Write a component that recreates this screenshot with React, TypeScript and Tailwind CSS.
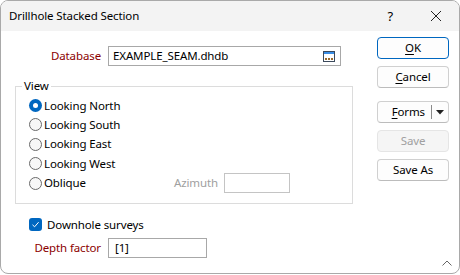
import React from "react";

function Radio({ checked }: { checked?: boolean }) {
  if (checked) {
    return (
      <span className="w-[13px] h-[13px] rounded-full bg-[#0067c0] flex items-center justify-center shrink-0">
        <span className="w-[5px] h-[5px] rounded-full bg-white" />
      </span>
    );
  }
  return <span className="w-[13px] h-[13px] rounded-full border border-[#6a6a6a] bg-[#f7f7f7] shrink-0" />;
}

function RadioRow({ label, checked, h }: { label: string; checked?: boolean; h: string }) {
  return (
    <div className={`flex items-center ${h}`}>
      <Radio checked={checked} />
      <span className="ml-[2px]">{label}</span>
    </div>
  );
}

function Btn({ children, primary, disabled, className = "" }: { children: React.ReactNode; primary?: boolean; disabled?: boolean; className?: string }) {
  const base = "w-[72px] h-[22px] rounded-[4px] flex items-center justify-center shrink-0";
  const look = primary
    ? "border border-[#0067c0] bg-[#fdfdfd]"
    : disabled
    ? "border border-[#e5e5e5] bg-[#f5f5f5] text-[#a0a0a0]"
    : "border border-[#d0d0d0] border-b-[#bcbcbc] bg-[#fdfdfd]";
  return <div className={`${base} ${look} ${className}`}>{children}</div>;
}

export default function App() {
  return (
    <div className="w-[460px] h-[275px] bg-white">
      <div className="w-[460px] h-[274px] rounded-[8px] border border-[#a9a9a9] overflow-hidden flex flex-col bg-white font-['Noto_Sans',sans-serif] text-[11.5px] tracking-[-0.12px] leading-none text-black">
        <div className="h-[30px] bg-[#f3f3f3] flex items-center shrink-0">
          <span className="ml-[8px]">Drillhole Stacked Section</span>
          <span className="ml-auto mr-[37px] text-[13px]">?</span>
          <svg width="12" height="12" viewBox="0 0 12 12" className="mr-[17px]">
            <path d="M1 1 L11 11 M11 1 L1 11" stroke="#222" strokeWidth="1" />
          </svg>
        </div>
        <div className="flex flex-1 relative">
          <div className="w-[376px] pl-[14px] flex flex-col shrink-0">
            <div className="flex items-center mt-[15px] h-[20px]">
              <span className="w-[86px] text-right text-[#8b0000]">Database</span>
              <div className="ml-[7px] w-[233px] h-[20px] border border-[#a8a8a8] flex items-center pl-[4px] pr-[5px]">
                <span>EXAMPLE_SEAM.dhdb</span>
                <svg width="12" height="11" viewBox="0 0 12 11" className="ml-auto">
                  <rect x="0.5" y="0.5" width="11" height="10" fill="#fff" stroke="#3c4a5c" />
                  <rect x="1" y="1" width="10" height="2" fill="#3a8ee6" />
                  <rect x="2" y="7" width="2" height="2" fill="#9a6a2a" />
                  <rect x="5" y="7" width="2" height="2" fill="#9a6a2a" />
                  <rect x="8" y="7" width="2" height="2" fill="#9a6a2a" />
                </svg>
              </div>
            </div>
            <div className="relative mt-[20px] w-[338px] h-[118px] border border-[#dcdcdc] flex flex-col pl-[13px] pt-[9px]">
              <span className="absolute left-[6px] top-[-7px] bg-white px-[2px]">View</span>
              <RadioRow label="Looking North" checked h="h-[19px]" />
              <RadioRow label="Looking South" h="h-[19px]" />
              <RadioRow label="Looking East" h="h-[20px]" />
              <RadioRow label="Looking West" h="h-[19px]" />
              <div className="flex items-center h-[20px]">
                <div className="w-[145px] flex items-center shrink-0">
                  <Radio />
                  <span className="ml-[2px]">Oblique</span>
                </div>
                <span className="text-[#a0a0a0] shrink-0">Azimuth</span>
                <div className="ml-[6px] w-[66px] h-[20px] border border-[#c4c4c4] shrink-0" />
              </div>
            </div>
            <div className="flex items-center mt-[14px] ml-[14px] h-[13px]">
              <span className="w-[13px] h-[13px] rounded-[3px] bg-[#0067c0] flex items-center justify-center">
                <svg width="9" height="9" viewBox="0 0 9 9">
                  <path d="M1.5 4.8 L3.6 6.8 L7.6 2.2" stroke="#fff" strokeWidth="1" fill="none" />
                </svg>
              </span>
              <span className="ml-[5px]">Downhole surveys</span>
            </div>
            <div className="flex items-center mt-[7px] h-[20px]">
              <span className="w-[86px] text-right text-[#8b0000]">Depth factor</span>
              <div className="ml-[7px] w-[99px] h-[20px] border border-[#a8a8a8] flex items-center pl-[6px]">
                <span>[1]</span>
              </div>
            </div>
          </div>
          <div className="flex flex-col pt-[6px]">
            <Btn primary><span><u className="underline-offset-2">O</u>K</span></Btn>
            <Btn className="mt-[7px]"><span><u className="underline-offset-2">C</u>ancel</span></Btn>
            <Btn className="mt-[13px] justify-end">
              <span className="mr-[6px]"><u className="underline-offset-2">F</u>orms</span>
              <span className="w-px h-[14px] bg-[#8a8a8a]" />
              <svg width="8" height="5" viewBox="0 0 8 5" className="mx-[4px]">
                <path d="M0 0 L8 0 L4 4.5 Z" fill="#222" />
              </svg>
            </Btn>
            <Btn disabled className="mt-[7px]">Save</Btn>
            <Btn className="mt-[7px]">Save As</Btn>
          </div>
          <svg width="10" height="6" viewBox="0 0 10 6" className="absolute right-[7px] bottom-[7px]">
            <path d="M0.5 5.5 L5 1 L9.5 5.5" stroke="#666" strokeWidth="1" fill="none" />
          </svg>
        </div>
      </div>
    </div>
  );
}
